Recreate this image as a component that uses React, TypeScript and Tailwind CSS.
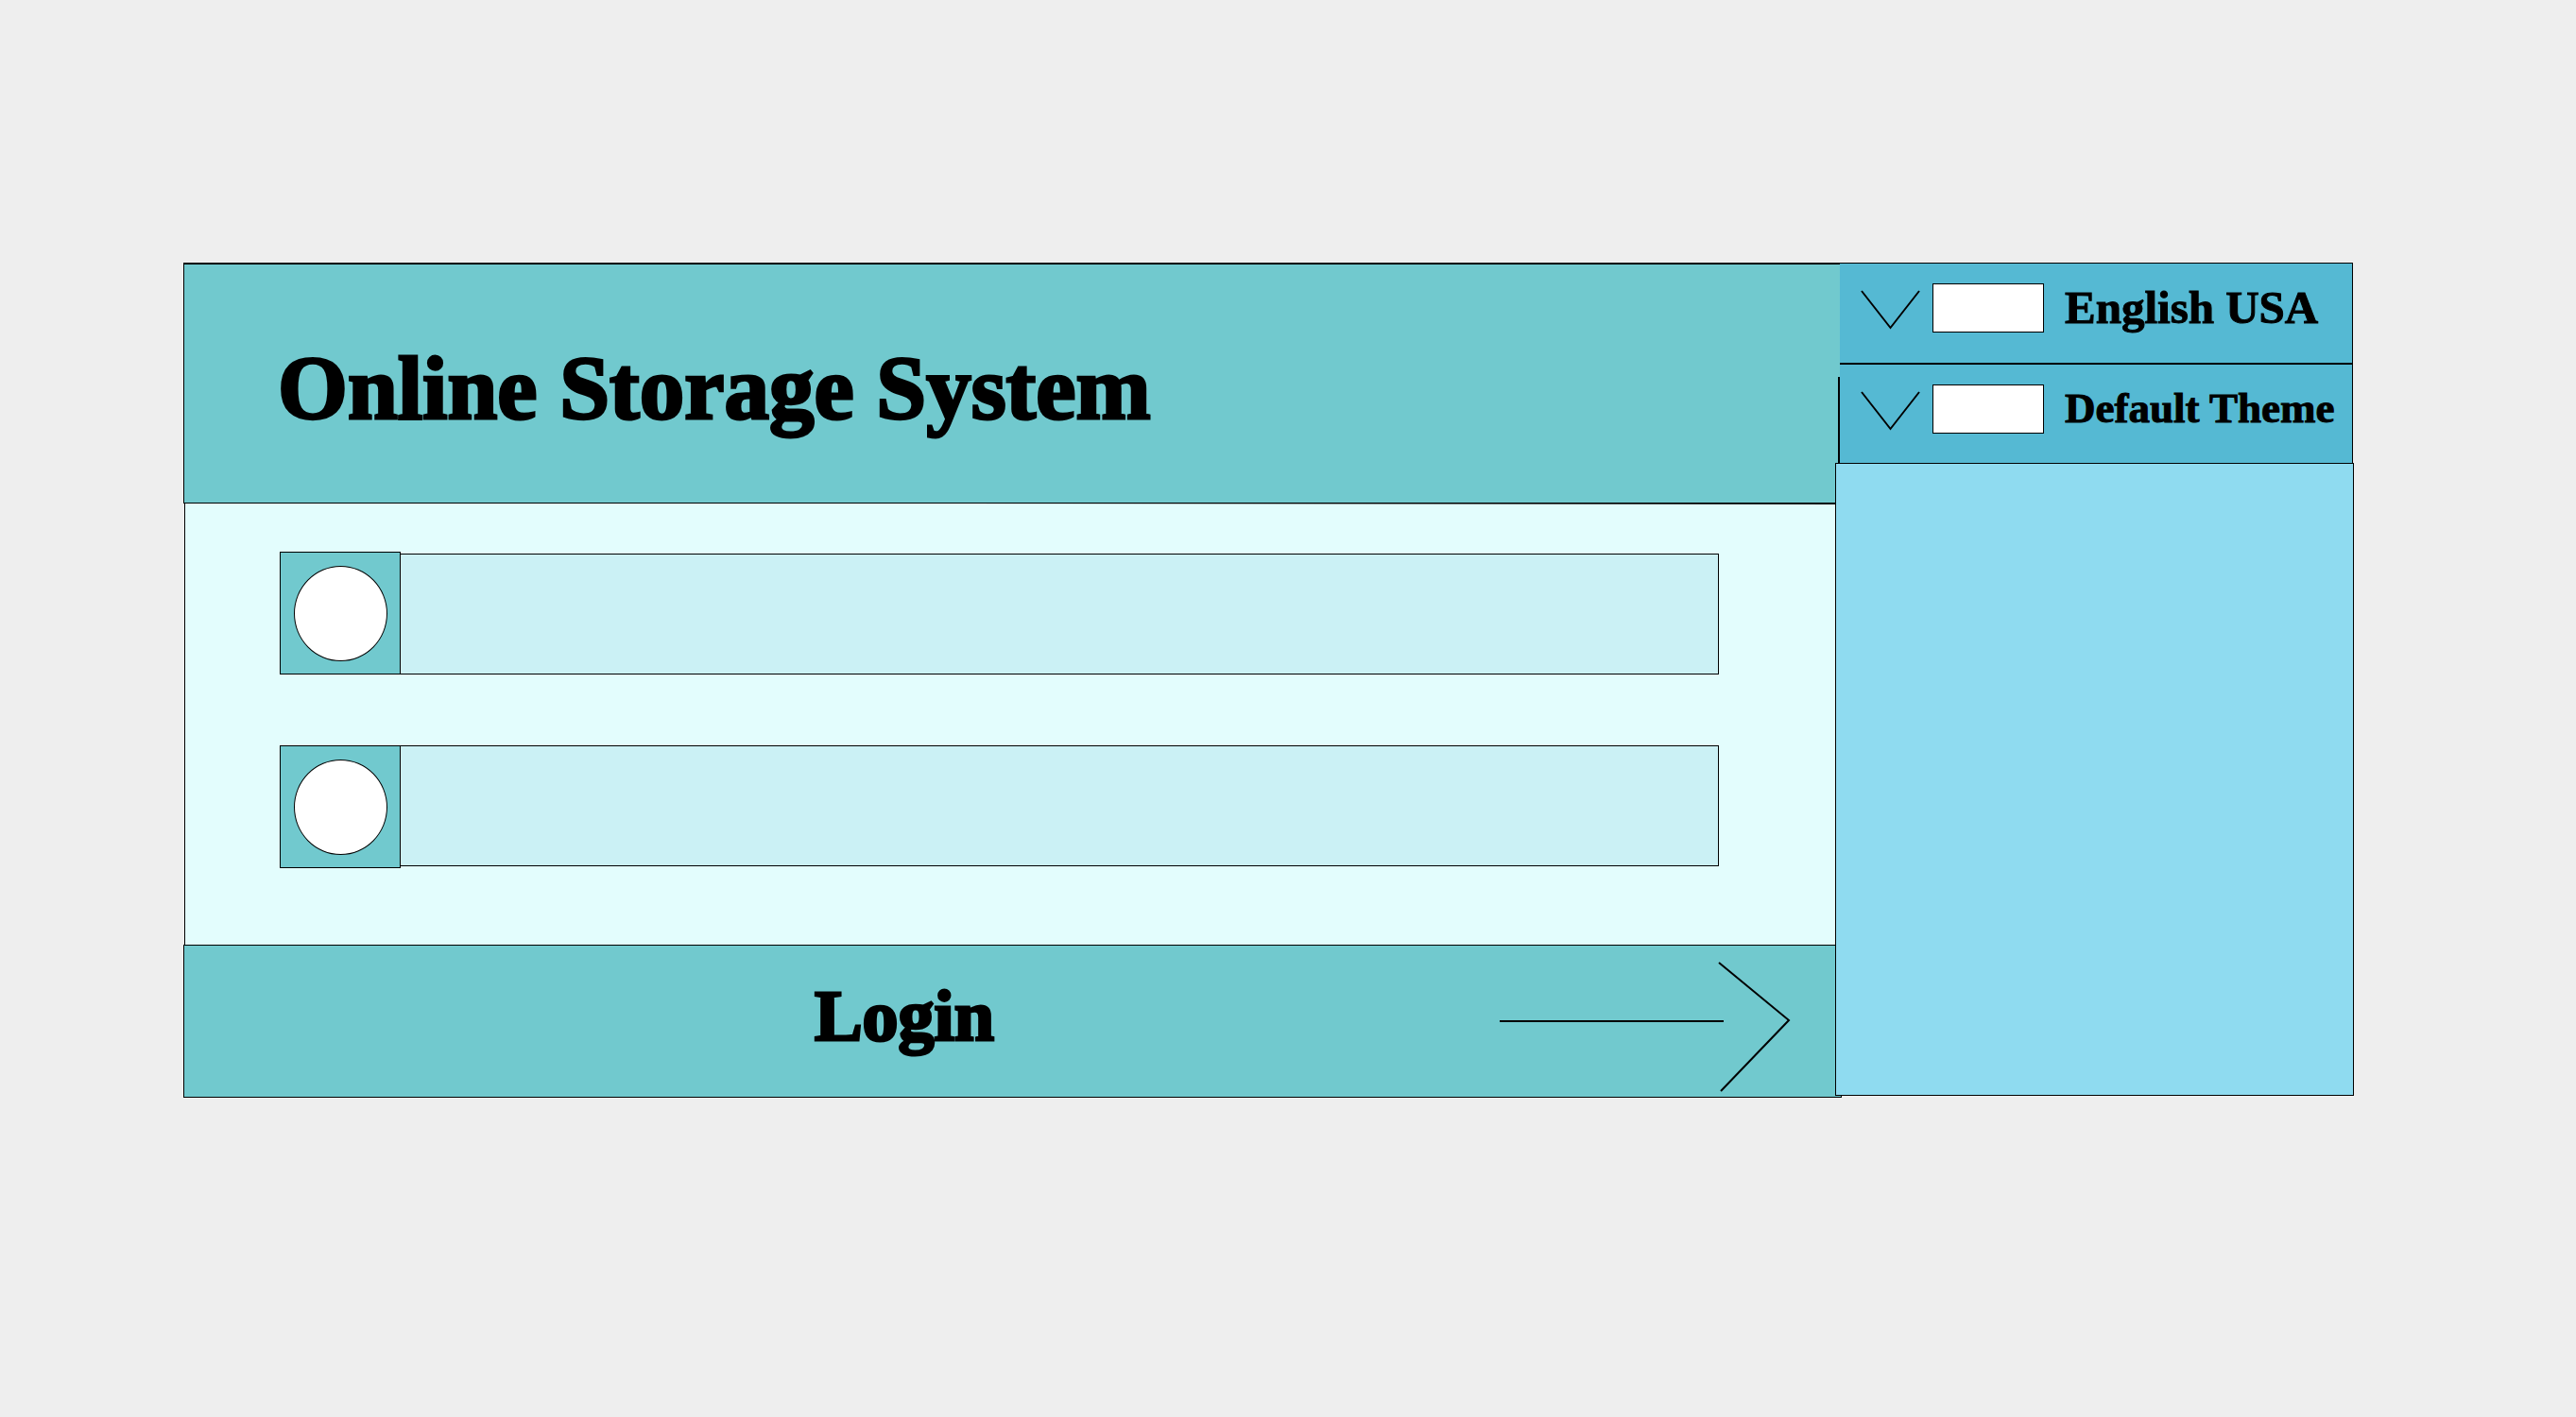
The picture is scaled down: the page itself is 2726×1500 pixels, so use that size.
import React from "react";

const serif = "font-['Liberation_Serif',serif] font-bold text-black";

function Preference({
  name,
  value,
  className,
  textClass,
}: {
  name: string;
  value: string;
  className: string;
  textClass: string;
}) {
  return (
    <label className={`flex items-center pl-[22px] ${className}`}>
      <svg
        className="h-[52px] w-16 shrink-0"
        viewBox="0 0 64 52"
        fill="none"
        stroke="black"
        strokeWidth="2"
        aria-hidden="true"
      >
        <path d="M1 8 31.5 47 62 8" />
      </svg>
      <span className="ml-3 h-[52px] w-[118px] shrink-0 border border-black bg-white" />
      <select
        aria-label={name}
        defaultValue={value}
        className={`ml-[22px] min-w-0 flex-1 appearance-none bg-transparent outline-none ${serif} [-webkit-text-stroke:1px_black] ${textClass}`}
      >
        <option>{value}</option>
      </select>
    </label>
  );
}

function Field({
  id,
  label,
  type,
  className,
}: {
  id: string;
  label: string;
  type: string;
  className: string;
}) {
  return (
    <div className={`flex ${className}`}>
      <label
        htmlFor={id}
        aria-label={label}
        className="flex h-[130px] w-32 shrink-0 items-center justify-center border border-black bg-[#71c9ce]"
      >
        <span className="h-[101px] w-[99px] rounded-[50%] border border-black bg-white" />
      </label>
      <input
        id={id}
        type={type}
        className="h-32 min-w-0 flex-1 border border-l-0 border-black bg-[#cbf1f5] px-8 text-5xl outline-none"
      />
    </div>
  );
}

export default function App() {
  return (
    <div className="min-h-screen bg-[#eeeeee] pt-[278px] pr-[235px] pb-24 pl-[194px]">
      <div className="flex items-start">
        <main className="min-w-0 flex-1">
          <header className="relative h-[255px] border-t-2 border-b border-l border-black bg-[#71c9ce] pt-[84px] pl-[99px]">
            <h1 className={`text-[95px] leading-none whitespace-nowrap ${serif} [-webkit-text-stroke:3px_black]`}>
              Online Storage System
            </h1>
            {/* The rule under the header thickens towards the right */}
            <svg
              className="absolute top-full left-0 h-0.5 w-full"
              viewBox="0 0 100 2"
              preserveAspectRatio="none"
              aria-hidden="true"
            >
              <path d="M0 0H100V2Z" />
            </svg>
          </header>
          <form onSubmit={(e) => e.preventDefault()}>
            <div className="ml-px flex flex-col gap-[75px] border-l border-black bg-[#e3fdfd] pt-[51px] pr-[123px] pb-[81px] pl-[100px]">
              <Field id="user" label="Username" type="text" className="items-end" />
              <Field id="pass" label="Password" type="password" className="items-start" />
            </div>
            <div className="-mr-[7px]">
              <button
                type="submit"
                className="flex h-[162px] w-full items-center justify-between border border-black bg-[#71c9ce] pr-[53px] pl-[38%]"
              >
                <span className={`pb-3 text-[76px] leading-none ${serif} [-webkit-text-stroke:3px_black]`}>
                  Login
                </span>
                <svg
                  className="h-40 w-[308px] shrink-0"
                  viewBox="0 0 308 160"
                  fill="none"
                  stroke="black"
                  strokeWidth="2"
                  aria-hidden="true"
                >
                  <path d="M0 80H237M232 18 306 79 234 154" />
                </svg>
              </button>
            </div>
          </form>
        </main>

        <aside className="relative w-[549px] shrink-0">
          <div className="mr-px flex bg-[#71c9ce]">
            <div className="w-[3px] border-t-2 border-black" />
            <div className="flex w-0.5 flex-col border-t-2 border-black pt-[119px]">
              <div className="flex-1 bg-black" />
            </div>
            <div className="min-w-0 flex-1 border-t border-r border-black bg-[#55b9d3]">
              <Preference
                name="Language"
                value="English USA"
                className="h-[107px] border-b-2 border-black pb-[11px]"
                textClass="text-[49px]"
              />
              <Preference
                name="Theme"
                value="Default Theme"
                className="h-[104px] pb-2.5"
                textClass="text-[45px]"
              />
            </div>
          </div>
          <div className="h-[670px] border border-black bg-[#8fdbf0]" />
        </aside>
      </div>
    </div>
  );
}
